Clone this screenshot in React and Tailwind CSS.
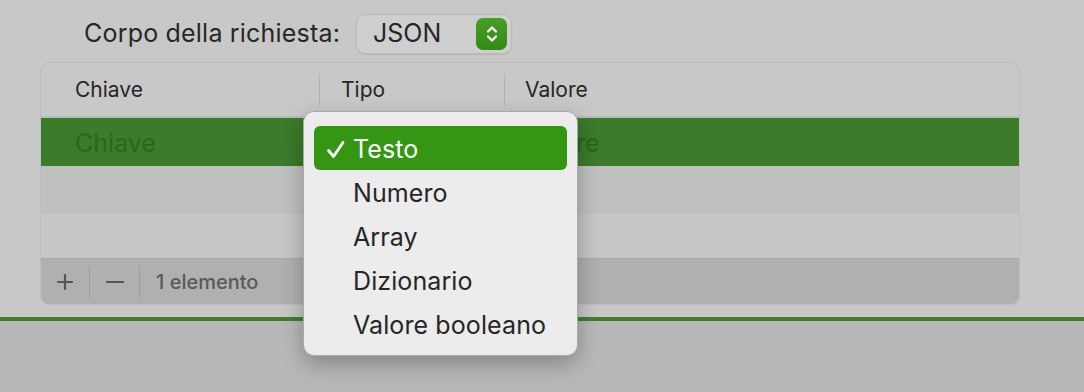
import React from "react";

const items = ["Testo", "Numero", "Array", "Dizionario", "Valore booleano"];

function Stepper() {
  return (
    <div className="w-[31px] h-[32px] rounded-[7px] bg-gradient-to-b from-[#45a024] to-[#338a18] flex items-center justify-center">
      <svg width="14" height="22" viewBox="0 0 14 22" fill="none" stroke="white" strokeWidth="2.2" strokeLinecap="round" strokeLinejoin="round">
        <path d="M3 8.5 L7 4.5 L11 8.5" />
        <path d="M3 13.5 L7 17.5 L11 13.5" />
      </svg>
    </div>
  );
}

function TypeMenu() {
  return (
    <div className="absolute left-[303px] top-[111px] w-[275px] h-[245px] rounded-[11px] bg-[#ececec] border border-[#a9a9a9] shadow-[0_8px_22px_rgba(0,0,0,0.28)] px-[10px] pt-[14px]">
      {items.map((label, i) => (
        <div
          key={label}
          className={
            i === 0
              ? "h-[44px] rounded-[6px] bg-[#359613] text-white flex items-center"
              : "h-[44px] text-[#262626] flex items-center"
          }
        >
          <span className="w-[39px] flex justify-end pr-[7px] pt-[3px]">
            {i === 0 && (
              <svg width="20" height="20" viewBox="0 0 20 20" fill="none" stroke="white" strokeWidth="2.8" strokeLinecap="round" strokeLinejoin="round">
                <path d="M2.5 10.5 L7.5 16.5 L17 2.5" />
              </svg>
            )}
          </span>
          <span className="text-[25px] tracking-[0.1px] pt-[3px]">{label}</span>
        </div>
      ))}
    </div>
  );
}

export default function App() {
  return (
    <div className="relative w-[1084px] h-[392px] overflow-hidden bg-[#b8b8b8] font-['Inter',sans-serif]">
      <div className="h-[317px] bg-[#c8c8c8] pt-[14px]">
        <div className="flex items-center h-[40px] pl-[84px]">
          <span className="w-[255px] text-[25px] tracking-[0.2px] text-[#262626] whitespace-nowrap">Corpo della richiesta:</span>
          <div className="ml-[17px] w-[156px] h-[40px] rounded-[9px] bg-[#cfcfcf] border border-[#b9b9b9] shadow-[0_1px_1px_rgba(0,0,0,0.08)] flex items-center justify-between pl-[16px] pr-[4px]">
            <span className="text-[25px] text-[#262626]">JSON</span>
            <Stepper />
          </div>
        </div>

        <div className="ml-[40px] mt-[8px] w-[980px] h-[243px] rounded-[9px] border border-[#bebebe] overflow-hidden flex flex-col">
          <div className="h-[55px] shrink-0 flex items-center border-b-[2px] border-[#bbbbbb] text-[21px] text-[#262626]">
            <div className="w-[278px] pl-[34px] pt-[1px]">Chiave</div>
            <div className="w-px h-[32px] bg-[#b3b3b3]" />
            <div className="w-[184px] pl-[21px] pt-[1px]">Tipo</div>
            <div className="w-px h-[32px] bg-[#b3b3b3]" />
            <div className="pl-[20px] pt-[1px]">Valore</div>
          </div>
          <div className="h-[48px] shrink-0 bg-[#3b7b29] flex items-center text-[25px] text-[#2c6420] pt-[3px]">
            <div className="w-[279px] pl-[34px]">Chiave</div>
            <div className="w-[185px]" />
            <div className="pl-[20px]">Valore</div>
          </div>
          <div className="h-[48px] shrink-0 bg-[#bfc1bf]" />
          <div className="h-[44px] shrink-0 bg-[#c7c7c7]" />
          <div className="flex-1 bg-[#b0b0b0] border-t border-[#a6a6a6] flex items-center text-[#595959]">
            <div className="w-[48px] flex justify-center">
              <svg width="18" height="18" viewBox="0 0 18 18" stroke="#555" strokeWidth="2.2" strokeLinecap="round">
                <path d="M9 2 V16 M2 9 H16" />
              </svg>
            </div>
            <div className="w-px h-[32px] bg-[#9c9c9c]" />
            <div className="w-[49px] flex justify-center">
              <svg width="20" height="18" viewBox="0 0 20 18" stroke="#555" strokeWidth="2.2" strokeLinecap="round">
                <path d="M2 9 H18" />
              </svg>
            </div>
            <div className="w-px h-[32px] bg-[#9c9c9c]" />
            <span className="ml-[16px] text-[20px] font-medium">1 elemento</span>
          </div>
        </div>
      </div>
      <div className="h-[4px] bg-[#3f7f2b]" />
      <TypeMenu />
    </div>
  );
}
